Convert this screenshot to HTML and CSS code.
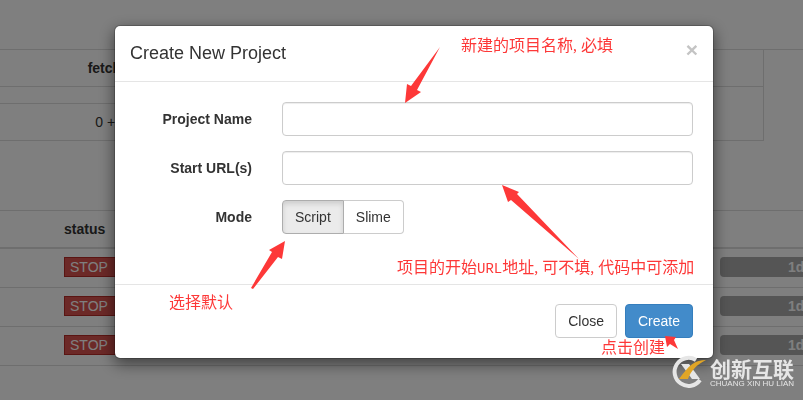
FILE: index.html
```html
<!DOCTYPE html>
<html lang="zh-CN">
<head>
    <meta charset="UTF-8">
    <meta name="viewport" content="width=device-width, initial-scale=1.0">
    <title>Create New Project</title>
    <link rel="stylesheet" href="styles.css">
</head>
<body>
    <main class="dashboard">
        <table class="queue">
            <tr>
                <th class="queue-name">fetcher</th>
                <th class="queue-info"></th>
                <th class="queue-rest"></th>
            </tr>
            <tr>
                <td></td>
                <td class="queue-info" rowspan="2"></td>
            </tr>
            <tr>
                <td class="queue-name">0 + 0</td>
            </tr>
        </table>
        <table class="projects">
            <thead>
                <tr>
                    <th class="status">status</th>
                    <th class="progress-cell"></th>
                </tr>
            </thead>
            <tbody>
                <tr>
                    <td class="status"><span class="label">STOP</span></td>
                    <td class="progress-cell"><div class="progress">1d</div></td>
                </tr>
                <tr>
                    <td class="status"><span class="label">STOP</span></td>
                    <td class="progress-cell"><div class="progress">1d</div></td>
                </tr>
                <tr>
                    <td class="status"><span class="label">STOP</span></td>
                    <td class="progress-cell"><div class="progress">1d</div></td>
                </tr>
            </tbody>
        </table>
    </main>

    <div class="backdrop">
        <form class="modal">
            <div class="modal-header">
                <h4>Create New Project</h4>
                <button type="button" class="close" aria-label="Close">×</button>
            </div>
            <div class="modal-body">
                <div class="form-group">
                    <label for="project-name">Project Name</label>
                    <input type="text" id="project-name">
                </div>
                <div class="form-group">
                    <label for="start-urls">Start URL(s)</label>
                    <input type="text" id="start-urls">
                </div>
                <div class="form-group">
                    <span class="group-label" id="mode-label">Mode</span>
                    <div class="btn-group" role="group" aria-labelledby="mode-label">
                        <button type="button" class="btn active" aria-pressed="true">Script</button>
                        <button type="button" class="btn" aria-pressed="false">Slime</button>
                    </div>
                </div>
            </div>
            <div class="modal-footer">
                <button type="button" class="btn">Close</button>
                <button type="submit" class="btn btn-primary">Create</button>
            </div>

            <!-- notes drawn over the dialog -->
            <svg class="arrows" viewBox="0 0 600 334" aria-hidden="true">
                <path d="M325 21L302 64L306 66L290 77L292 58L296 60Z" />
                <path d="M387 159L404 166L402 168L464 233L396 174L393 176Z" />
                <path d="M170 215L154 224L157 226L136 262L138 263L163 231L167 233Z" />
                <path d="M550 310L561 311L559 314L563 323L555 318L552 321Z" />
            </svg>
            <span class="note note-name">新建的项目名称<i>,</i>必填</span>
            <span class="note note-url">项目的开始<b>URL</b>地址<i>,</i>可不填<i>,</i>代码中可添加</span>
            <span class="note note-mode">选择默认</span>
            <span class="note note-create">点击创建</span>
        </form>
    </div>

    <div class="watermark">
        <svg viewBox="0 0 36 36" aria-hidden="true">
            <path class="ring" d="M25 6A14 14 0 1 0 29 26" />
            <path class="cross" d="M10 10H18L29 25H21Z" />
            <path class="swoosh" d="M35 6C24 6 18 11 8 25H17C20 17 25 11 35 6Z" />
        </svg>
        <div class="watermark-text">
            <strong>创新互联</strong>
            <small>CHUANG XIN HU LIAN</small>
        </div>
    </div>
</body>
</html>
```
FILE: styles.css
```css
* {
    box-sizing: border-box;
}
body {
    margin: 0;
    font-family: "Liberation Sans", Arial, sans-serif;
    font-size: 14px;
    line-height: 20px;
    color: #333;
    background: #fff;
    overflow: hidden;
}
table {
    width: 100%;
    border-collapse: separate;
    border-spacing: 0;
    table-layout: fixed;
}
th, td {
    padding: 8px;
    border-top: 1px solid #ddd;
    text-align: left;
}

/* page behind the dialog */
.dashboard {
    padding-top: 49px;
}
.queue {
    margin-bottom: 69px;
}
.queue .queue-name {
    width: 150px;
    padding-left: 80px;
    text-align: center;
}
.queue .queue-info {
    border-right: 1px solid #ddd;
}
.queue .queue-rest {
    width: 39px;
}
.queue tr:last-child td, .queue td.queue-info {
    border-bottom: 1px solid #ddd;
}
.queue tr:first-child th {
    height: 37px;
}
.projects th {
    border-bottom: 2px solid #ddd;
}
.projects tbody td {
    height: 39px;
    padding: 8px 8px 10px;
    border-top: none;
    border-bottom: 1px solid #ddd;
    vertical-align: top;
}
.projects .status {
    padding-left: 64px;
}
.label {
    display: block;
    width: 52px;
    padding: 1px 5px 0;
    line-height: 17px;
    color: #fff;
    background: #d9534f;
    border: 1px solid #b52b27;
}
.projects .progress-cell {
    width: 83px;
    padding-left: 0;
    padding-right: 0;
}
.progress {
    height: 20px;
    padding-left: 68px;
    font-weight: bold;
    color: #fff;
    background: #aaa;
    border-radius: 4px 0 0 4px;
    overflow: hidden;
    white-space: nowrap;
}

/* dialog */
.backdrop {
    position: fixed;
    inset: 0;
    padding: 25px 0 0 25px;
    background: rgba(0, 0, 0, 0.5);
}
.modal {
    position: relative;
    max-width: 600px;
    margin: 0 auto;
    background: #fff;
    background-clip: padding-box;
    border: 1px solid rgba(0, 0, 0, 0.2);
    border-radius: 6px;
    box-shadow: 0 5px 15px rgba(0, 0, 0, 0.5);
}
.modal-header {
    display: flex;
    justify-content: space-between;
    align-items: flex-start;
    padding: 15px;
    border-bottom: 1px solid #e5e5e5;
}
.modal-header h4 {
    margin: 0;
    font-size: 18px;
    font-weight: normal;
    line-height: 25px;
}
.close {
    padding: 0;
    border: none;
    background: none;
    font-family: inherit;
    font-size: 21px;
    font-weight: bold;
    line-height: 18px;
    color: #c4c4c4;
}
.modal-body {
    padding: 20px 20px 35px 15px;
}
.form-group {
    display: grid;
    grid-template-columns: 122px 1fr;
    gap: 30px;
    align-items: center;
    margin-bottom: 15px;
}
.form-group label, .group-label {
    font-weight: bold;
    text-align: right;
}
.form-group input {
    width: 100%;
    height: 34px;
    padding: 6px 12px;
    border: 1px solid #ccc;
    border-radius: 4px;
    box-shadow: inset 0 1px 1px rgba(0, 0, 0, 0.075);
    font: inherit;
}
.btn {
    padding: 6px 12px;
    border: 1px solid #ccc;
    border-radius: 4px;
    background: #fff;
    color: #333;
    font: inherit;
}
.btn-group {
    display: flex;
}
.btn-group .btn:first-child {
    border-radius: 4px 0 0 4px;
}
.btn-group .btn:last-child {
    margin-left: -1px;
    border-left-color: #adadad;
    border-radius: 0 4px 4px 0;
}
.btn.active {
    background: #ebebeb;
    border-color: #adadad;
    box-shadow: inset 0 3px 5px rgba(0, 0, 0, 0.125);
}
.btn-primary {
    background: #428bca;
    border-color: #357ebd;
    color: #fff;
}
.modal-footer {
    display: flex;
    justify-content: flex-end;
    gap: 8px;
    padding: 19px 20px 20px;
    border-top: 1px solid #e5e5e5;
}

/* notes */
.arrows {
    position: absolute;
    top: 0;
    left: 0;
    width: 600px;
    height: 334px;
    fill: #fd3838;
    pointer-events: none;
}
.note {
    position: absolute;
    font-family: "Liberation Serif", "Noto Sans CJK SC", sans-serif;
    font-size: 16px;
    color: #fd3838;
    white-space: nowrap;
}
.note i {
    display: inline-block;
    width: 8px;
    font-style: normal;
}
.note b {
    font-family: "Liberation Mono", monospace;
    font-size: 14px;
    font-weight: normal;
}
.note-name {
    top: 10px;
    left: 346px;
}
.note-url {
    top: 232px;
    left: 282px;
}
.note-mode {
    top: 267px;
    left: 54px;
}
.note-create {
    top: 312px;
    left: 486px;
}

/* watermark in the corner */
.watermark {
    position: fixed;
    right: 9px;
    bottom: 10px;
    display: flex;
    align-items: center;
    gap: 3px;
    color: #e6e6e6;
}
.watermark svg {
    width: 36px;
    height: 36px;
}
.ring {
    fill: none;
    stroke: #e6e6e6;
    stroke-width: 4;
}
.cross {
    fill: #e6e6e6;
}
.swoosh {
    fill: #e0a526;
}
.watermark-text {
    display: flex;
    flex-direction: column;
    padding-top: 2px;
}
.watermark-text strong {
    font-family: "Noto Sans CJK SC", sans-serif;
    font-size: 21px;
    line-height: 22px;
}
.watermark-text small {
    font-size: 8px;
    line-height: 10px;
}
```
